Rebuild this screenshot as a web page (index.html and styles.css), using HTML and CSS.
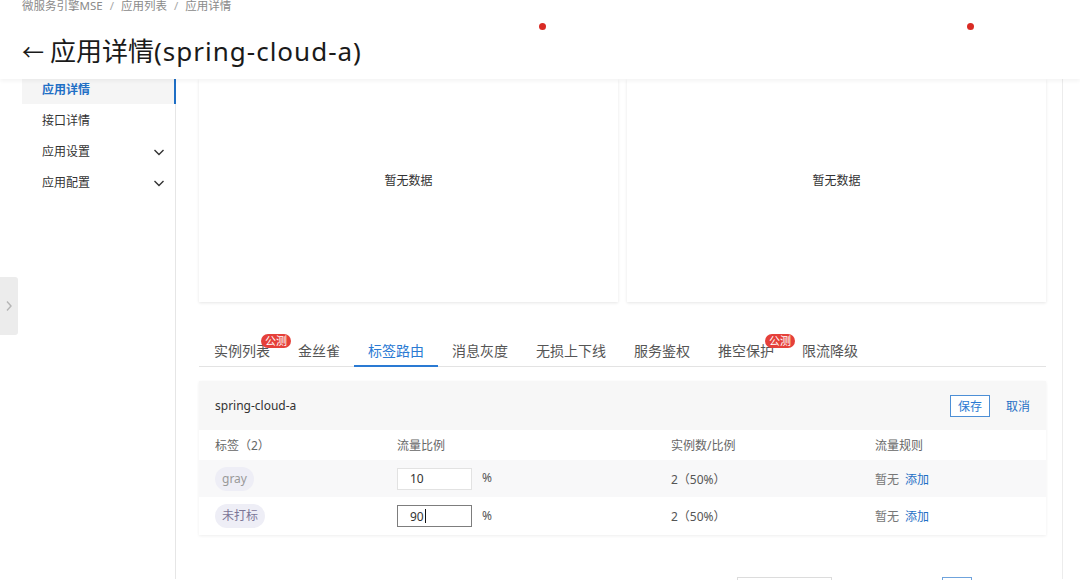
FILE: index.html
```html
<!DOCTYPE html>
<html lang="zh-CN">
<head>
<meta charset="utf-8">
<title>应用详情</title>
<link rel="stylesheet" href="styles.css">
</head>
<body>
<div class="page">
  <header class="topbar">
    <div class="crumbs">
      <span>微服务引擎MSE</span><span class="sep">/</span><span>应用列表</span><span class="sep">/</span><span>应用详情</span>
    </div>
    <h1 class="title"><span class="back">&larr;</span>应用详情<span class="title-latin">(spring-cloud-a)</span></h1>
    <span class="dot dot-a"></span>
    <span class="dot dot-b"></span>
  </header>

  <div class="layout">
    <aside class="sidenav">
      <div class="nav-item active">应用详情</div>
      <div class="nav-item">接口详情</div>
      <div class="nav-item">应用设置
        <svg class="chev" width="12" height="12" viewBox="0 0 12 12"><path d="M1.5 4 L6 8.5 L10.5 4" fill="none" stroke="#333" stroke-width="1.4"/></svg>
      </div>
      <div class="nav-item">应用配置
        <svg class="chev" width="12" height="12" viewBox="0 0 12 12"><path d="M1.5 4 L6 8.5 L10.5 4" fill="none" stroke="#333" stroke-width="1.4"/></svg>
      </div>
    </aside>

    <main class="content">
      <div class="charts">
        <div class="card"><span>暂无数据</span></div>
        <div class="card"><span>暂无数据</span></div>
      </div>

      <nav class="tabs">
        <div class="tab">实例列表<span class="badge">公测</span></div>
        <div class="tab">金丝雀</div>
        <div class="tab active">标签路由</div>
        <div class="tab">消息灰度</div>
        <div class="tab">无损上下线</div>
        <div class="tab">服务鉴权</div>
        <div class="tab">推空保护<span class="badge">公测</span></div>
        <div class="tab">限流降级</div>
      </nav>

      <section class="panel">
        <div class="panel-head">
          <span class="app-name">spring-cloud-a</span>
          <div class="actions">
            <button class="btn-save">保存</button>
            <a class="link">取消</a>
          </div>
        </div>
        <div class="grid-row head-row">
          <span>标签（2）</span>
          <span>流量比例</span>
          <span>实例数/比例</span>
          <span>流量规则</span>
        </div>
        <div class="grid-row data-row shaded">
          <span><span class="tag">gray</span></span>
          <span class="ratio"><span class="field">10</span><span class="pct">%</span></span>
          <span>2（50%）</span>
          <span><span class="muted">暂无</span><a class="link add">添加</a></span>
        </div>
        <div class="grid-row data-row">
          <span><span class="tag tag-untagged">未打标</span></span>
          <span class="ratio"><span class="field focused">90<span class="caret"></span></span><span class="pct">%</span></span>
          <span>2（50%）</span>
          <span><span class="muted">暂无</span><a class="link add">添加</a></span>
        </div>
      </section>

      <div class="pager">
        <span class="pager-select"></span>
        <span class="pager-btn current"></span>
      </div>
    </main>
  </div>

  <div class="edge-handle">
    <svg width="8" height="12" viewBox="0 0 8 12"><path d="M2 1.5 L6 6 L2 10.5" fill="none" stroke="#b5b5b5" stroke-width="1.4"/></svg>
  </div>
</div>
</body>
</html>
```

FILE: styles.css
```css
* { box-sizing: border-box; }

html, body {
  margin: 0;
  padding: 0;
  background: #fff;
}

body {
  font-family: "Noto Sans", "Noto Sans CJK SC", sans-serif;
  color: #333;
  font-size: 12px;
}

.page {
  position: relative;
  width: 1080px;
  height: 580px;
  overflow: hidden;
}

/* ---------- top bar ---------- */
.topbar {
  position: relative;
  z-index: 2;
  height: 80px;
  background: #fff;
  padding: 0 22px;
  box-shadow: 0 2px 4px rgba(0, 0, 0, 0.05);
}

.crumbs {
  margin-top: -1px;
  line-height: 14px;
  font-size: 11.5px;
  color: #8a8a8a;
}

.crumbs .sep {
  margin: 0 7px;
  color: #a8a8a8;
}

.title {
  margin: 20px 0 0;
  font-size: 26px;
  font-weight: 400;
  line-height: 36px;
  color: #1a1a1a;
  display: flex;
  align-items: center;
}

.title-latin {
  letter-spacing: 1px;
}

.back {
  font-size: 22px;
  margin-right: 6px;
  line-height: 36px;
}

.dot {
  position: absolute;
  top: 24px;
  width: 7px;
  height: 7px;
  border-radius: 50%;
  background: #d92b24;
}
.dot-a { left: 539px; }
.dot-b { left: 967px; }

/* ---------- layout ---------- */
.layout {
  display: flex;
  height: 500px;
}

.sidenav {
  width: 176px;
  flex: none;
  padding-left: 22px;
  border-right: 1px solid #e6e6e6;
  margin-top: -5px;
}

.nav-item {
  height: 31px;
  line-height: 31px;
  padding: 0 10px 0 20px;
  font-size: 12px;
  color: #333;
  display: flex;
  justify-content: space-between;
  align-items: center;
}

.nav-item.active {
  height: 30px;
  background: #f5f5f5;
  color: #1f6fc5;
  font-weight: 700;
  border-right: 2px solid #1f6fc5;
  margin-right: -1px;
  margin-bottom: 1px;
}

.chev { flex: none; }

.content {
  width: 887px;
  flex: none;
  padding: 0 16px 0 23px;
  border-right: 1px solid #ececec;
}

/* ---------- charts ---------- */
.charts {
  display: grid;
  grid-template-columns: 1fr 1fr;
  gap: 9px;
  height: 223px;
}

.card {
  background: #fff;
  box-shadow: 0 1px 3px rgba(0, 0, 0, 0.1);
  display: flex;
  align-items: center;
  justify-content: center;
  padding-bottom: 22px;
  font-size: 12px;
  color: #333;
}

/* ---------- tabs ---------- */
.tabs {
  margin-top: 24px;
  height: 41px;
  display: flex;
  border-bottom: 1px solid #e3e3e3;
}

.tab {
  position: relative;
  padding: 9px 14px 0;
  line-height: 32px;
  font-size: 14px;
  color: #555;
  white-space: nowrap;
}

.tab:first-child { margin-left: 1px; }

.tab.active {
  color: #2a7ad3;
  border-bottom: 2px solid #2a7ad3;
  margin-bottom: -1px;
}

.badge {
  position: absolute;
  top: 8px;
  right: -7px;
  height: 14px;
  line-height: 14px;
  padding: 0 4px;
  border-radius: 7px;
  background: #e5403a;
  color: #fff;
  font-size: 11px;
}

/* ---------- panel ---------- */
.panel {
  margin-top: 14px;
  background: #fff;
  box-shadow: 0 1px 3px rgba(0, 0, 0, 0.07);
}

.panel-head {
  height: 49px;
  background: #f7f7f7;
  padding: 0 16px;
  display: flex;
  align-items: center;
  justify-content: space-between;
}

.app-name {
  font-size: 12px;
  color: #333;
}

.actions {
  display: flex;
  align-items: center;
  padding-top: 1px;
}

.btn-save {
  width: 40px;
  height: 22px;
  border: 1px solid #4d8fd6;
  background: #fff;
  color: #2a7ad3;
  font-family: inherit;
  font-size: 12px;
  padding: 0;
}

.link {
  color: #1f6fc5;
  font-size: 12px;
  cursor: pointer;
}

.actions .link { margin-left: 16px; }

.grid-row {
  display: grid;
  grid-template-columns: 182px 274px 204px 1fr;
  align-items: center;
  padding: 0 16px;
  font-size: 12px;
}

.head-row {
  height: 30px;
  color: #666;
}

.data-row {
  height: 38px;
  color: #555;
}

.data-row.shaded {
  height: 37px;
  background: #f8f8f9;
}

.tag {
  display: inline-block;
  height: 24px;
  line-height: 24px;
  padding: 0 7px;
  border-radius: 12px;
  background: #eeeef6;
  color: #999;
  font-size: 12px;
}

.tag-untagged { color: #7c7596; }

.ratio {
  display: flex;
  align-items: center;
}

.field {
  display: inline-flex;
  align-items: center;
  width: 75px;
  height: 22px;
  padding-left: 12px;
  border: 1px solid #e2e2e2;
  background: #fff;
  color: #333;
  font-size: 12px;
}

.field.focused { border-color: #7d7d7d; }

.caret {
  display: inline-block;
  width: 1px;
  height: 14px;
  background: #111;
  margin-left: 1px;
}

.pct {
  margin-left: 10px;
  color: #555;
  position: relative;
  top: -1px;
}

.muted { color: #777; }
.add { margin-left: 6px; }

/* ---------- pager ---------- */
.pager {
  margin-top: 42px;
  display: flex;
  justify-content: flex-end;
  padding-right: 74px;
}

.pager-select {
  width: 95px;
  height: 28px;
  border: 1px solid #dcdcdc;
  margin-right: 110px;
}

.pager-btn {
  width: 30px;
  height: 28px;
  border: 1px solid #6fa3dc;
}

/* ---------- edge handle ---------- */
.edge-handle {
  position: absolute;
  left: 0;
  top: 277px;
  width: 18px;
  height: 58px;
  background: #ececec;
  border-radius: 0 3px 3px 0;
  display: flex;
  align-items: center;
  justify-content: center;
}
```
